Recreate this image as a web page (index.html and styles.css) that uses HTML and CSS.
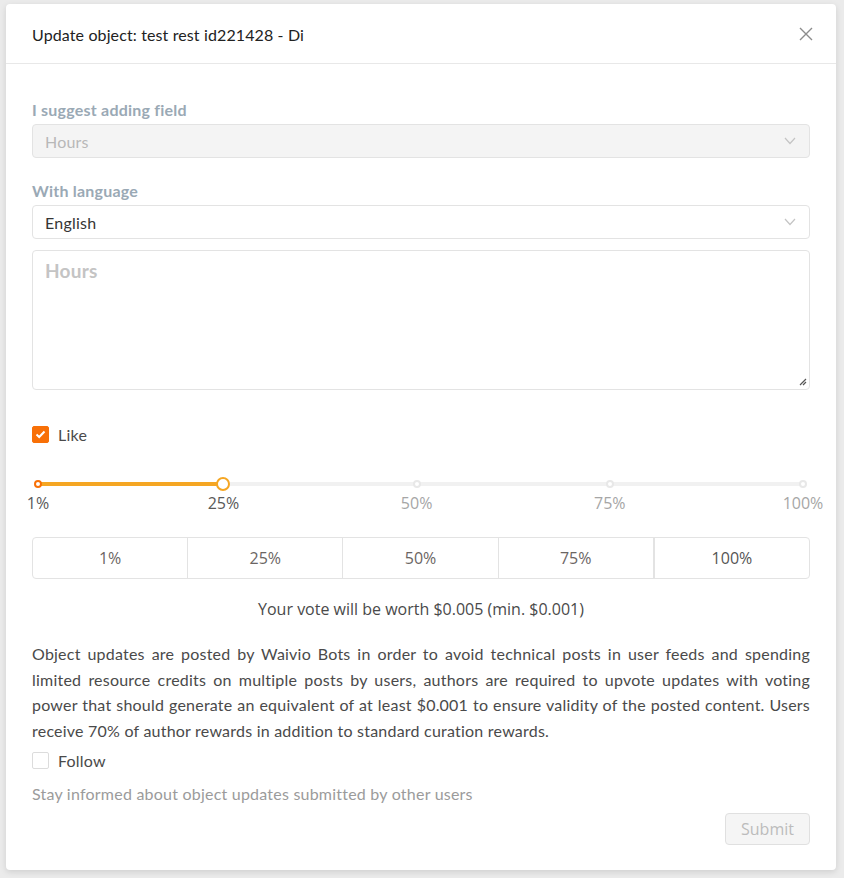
FILE: index.html
```html
<!DOCTYPE html>
<html>
<head>
<meta charset="utf-8">
<link rel="stylesheet" href="styles.css">
</head>
<body>
<div class="modal">
  <div class="modal-header">
    <div class="title">Update object: test rest id221428 - Di</div>
    <svg class="close" width="14" height="14" viewBox="0 0 14 14"><path d="M1 1L13 13M13 1L1 13" stroke="#8c8c8c" stroke-width="1.4" fill="none"/></svg>
  </div>
  <div class="modal-body">
    <div class="label first">I suggest adding field</div>
    <div class="select disabled">
      <span>Hours</span>
      <svg class="chev" width="12" height="8" viewBox="0 0 12 8"><path d="M1 1L6 6.5L11 1" stroke="#c4c4c4" stroke-width="1.2" fill="none"/></svg>
    </div>
    <div class="label second">With language</div>
    <div class="select">
      <span>English</span>
      <svg class="chev" width="12" height="8" viewBox="0 0 12 8"><path d="M1 1L6 6.5L11 1" stroke="#c4c4c4" stroke-width="1.2" fill="none"/></svg>
    </div>
    <div class="textarea">
      <span class="ph">Hours</span>
      <svg class="resize" width="8" height="8" viewBox="0 0 8 8"><path d="M7 1L1 7M7 4L4 7" stroke="#555" stroke-width="1.2" fill="none"/></svg>
    </div>
    <label class="check like">
      <span class="box on"><svg width="11" height="9" viewBox="0 0 11 9"><path d="M1.5 4.5L4.2 7L9.5 1.5" stroke="#fff" stroke-width="2" fill="none"/></svg></span>
      <span>Like</span>
    </label>
    <div class="slider">
      <div class="rail"></div>
      <div class="track" style="width:24.24%"></div>
      <span class="dot active" style="left:0%"></span>
      <span class="dot" style="left:49.49%"></span>
      <span class="dot" style="left:74.75%"></span>
      <span class="dot" style="left:100%"></span>
      <span class="handle" style="left:24.24%"></span>
      <span class="mark active" style="left:0%">1%</span>
      <span class="mark active" style="left:24.24%">25%</span>
      <span class="mark" style="left:49.49%">50%</span>
      <span class="mark" style="left:74.75%">75%</span>
      <span class="mark" style="left:100%">100%</span>
    </div>
    <div class="btn-group">
      <div class="pbtn">1%</div>
      <div class="pbtn">25%</div>
      <div class="pbtn">50%</div>
      <div class="pbtn">75%</div>
      <div class="pbtn">100%</div>
    </div>
    <div class="worth">Your vote will be worth $0.005 (min. $0.001)</div>
    <p class="info">Object updates are posted by Waivio Bots in order to avoid technical posts in user feeds and spending limited resource credits on multiple posts by users, authors are required to upvote updates with voting power that should generate an equivalent of at least $0.001 to ensure validity of the posted content. Users receive 70% of author rewards in addition to standard curation rewards.</p>
    <label class="check follow">
      <span class="box"></span>
      <span>Follow</span>
    </label>
    <div class="stay">Stay informed about object updates submitted by other users</div>
    <div class="footer">
      <div class="submit">Submit</div>
    </div>
  </div>
</div>
</body>
</html>
```

FILE: styles.css
```css
html, body {
  margin: 0;
  padding: 0;
}
body {
  background: #ebebeb;
  width: 844px;
  height: 878px;
  overflow: hidden;
  font-family: Lato, "Liberation Sans", sans-serif;
  color: #353535;
  letter-spacing: 0.22px;
}
.modal {
  margin: 4px 0 0 6px;
  width: 830px;
  height: 866px;
  background: #fff;
  border-radius: 4px;
  box-shadow: 0 2px 6px rgba(0,0,0,0.12);
  box-sizing: border-box;
}
.modal-header {
  height: 60px;
  border-bottom: 1px solid #e8e8e8;
  display: flex;
  align-items: center;
  justify-content: space-between;
  padding: 0 23px 0 26px;
  box-sizing: border-box;
}
.title {
  font-size: 16px;
  color: #222;
  padding-top: 1px;
  letter-spacing: 0.12px;
}
.close {
  display: block;
  margin-top: 1px;
}
.modal-body {
  padding: 0 26px;
}
.label {
  font-size: 16px;
  font-weight: 700;
  color: #9aa9b5;
  line-height: 20px;
}
.label.first { padding-top: 36px; }
.label.second { margin-top: 23px; }
.select {
  margin-top: 4px;
  height: 34px;
  border: 1px solid #e3e3e3;
  border-radius: 4px;
  box-sizing: border-box;
  display: flex;
  align-items: center;
  justify-content: space-between;
  padding: 0 13px 0 12px;
  font-size: 16px;
  color: #353535;
}
.select.disabled {
  background: #f4f4f4;
  color: #b8b8b8;
}
.chev { display: block; }
.textarea {
  margin-top: 11px;
  height: 140px;
  border: 1px solid #e3e3e3;
  border-radius: 4px;
  box-sizing: border-box;
  padding: 8px 12px;
  position: relative;
}
.ph {
  font-size: 19px;
  font-weight: 700;
  color: #c4c4c4;
}
.resize {
  position: absolute;
  right: 2px;
  bottom: 3px;
}
.check {
  display: flex;
  align-items: center;
  font-size: 16px;
  color: #4a4a4a;
  line-height: 21px;
}
.check .box {
  width: 17px;
  height: 17px;
  box-sizing: border-box;
  border: 1px solid #dcdcdc;
  border-radius: 2px;
  margin-right: 9px;
  display: flex;
  align-items: center;
  justify-content: center;
}
.check .box.on {
  background: #f87007;
  border-color: #f87007;
}
.like { margin-top: 34px; }
.slider {
  position: relative;
  margin: 26px 7px 0 6px;
  height: 46px;
}
.rail {
  position: absolute;
  left: 0;
  right: 0;
  top: 11px;
  height: 4px;
  background: #f1f1f1;
  border-radius: 2px;
}
.track {
  position: absolute;
  left: 0;
  top: 11px;
  height: 4px;
  background: #f5a623;
  border-radius: 2px;
}
.dot {
  position: absolute;
  top: 9px;
  width: 8px;
  height: 8px;
  margin-left: -4px;
  box-sizing: border-box;
  border: 2px solid #e8e8e8;
  border-radius: 50%;
  background: #fff;
}
.dot.active { border-color: #f87007; }
.handle {
  position: absolute;
  top: 6px;
  width: 14px;
  height: 14px;
  margin-left: -7px;
  box-sizing: border-box;
  border: 2px solid #f5a623;
  border-radius: 50%;
  background: #fff;
}
.mark {
  position: absolute;
  top: 22px;
  transform: translateX(-50%);
  font-family: "Open Sans", "Noto Sans", sans-serif;
  font-size: 16px;
  line-height: 20px;
  letter-spacing: 0;
  color: #a6a6a6;
  white-space: nowrap;
}
.mark.active { color: #595959; }
.btn-group {
  margin-top: 20px;
  display: flex;
  height: 42px;
  border: 1px solid #e3e3e3;
  border-radius: 4px;
  box-sizing: border-box;
}
.pbtn {
  flex: 1;
  display: flex;
  align-items: center;
  justify-content: center;
  font-family: "Open Sans", "Noto Sans", sans-serif;
  font-size: 16px;
  letter-spacing: 0;
  color: #6b6563;
  border-left: 1px solid #e3e3e3;
}
.pbtn:first-child { border-left: none; }
.pbtn:last-child { border-left-width: 2px; color: #555; }
.worth {
  margin-top: 19px;
  text-align: center;
  font-family: "Open Sans", "Noto Sans", sans-serif;
  font-size: 16px;
  line-height: 22px;
  letter-spacing: 0;
  color: #4a4a4a;
}
.info {
  margin: 21px 0 0;
  font-size: 16px;
  line-height: 25.7px;
  text-align: justify;
  color: #4a4a4a;
}
.follow { margin-top: 6px; }
.stay {
  margin-top: 12px;
  font-size: 16px;
  line-height: 22px;
  color: #9b9b9b;
}
.footer {
  display: flex;
  justify-content: flex-end;
  margin-top: 8px;
}
.submit {
  width: 85px;
  height: 32px;
  box-sizing: border-box;
  border: 1px solid #e0e0e0;
  border-radius: 4px;
  background: #f5f5f5;
  color: #bcbcbc;
  font-family: "Open Sans", "Noto Sans", sans-serif;
  font-size: 16px;
  letter-spacing: 0;
  display: flex;
  align-items: center;
  justify-content: center;
}
```
